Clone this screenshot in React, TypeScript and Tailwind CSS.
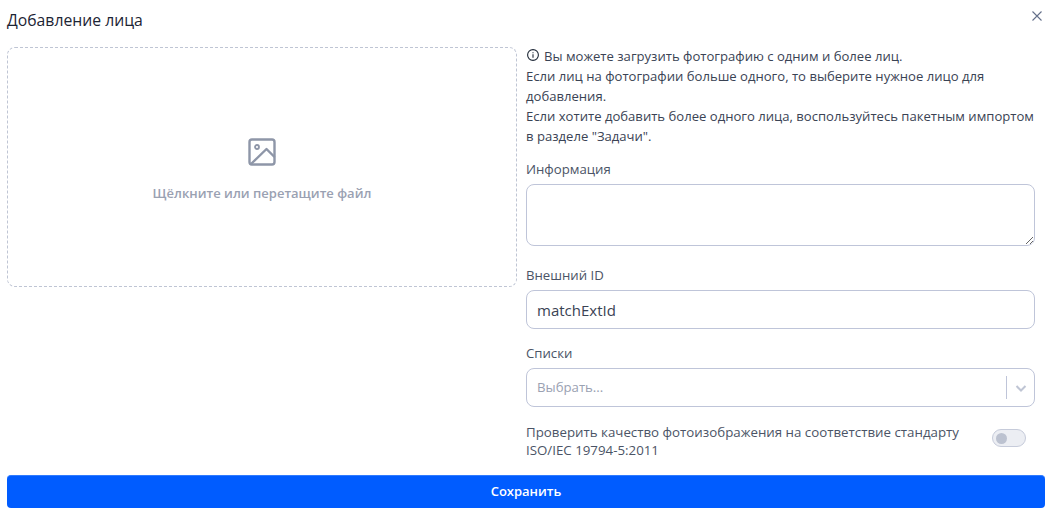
import React from "react";

export default function App() {
  return (
    <div className="w-[1050px] h-[518px] bg-white px-[7px] pt-[7px] font-['Open_Sans','Noto_Sans',sans-serif] text-[#1f2937] overflow-hidden flex flex-col">
      <div className="flex justify-between h-[40px] shrink-0">
        <div className="text-[15.75px] leading-[26px] text-[#1c2434]">Добавление лица</div>
        <button className="w-[14px] h-[14px] mt-[2px] mr-[-1px] text-[#64708a]">
          <svg viewBox="0 0 14 14" className="w-[14px] h-[14px]" fill="none" stroke="currentColor" strokeWidth="1.1"><path d="M2.5 2.5l9 9M11.5 2.5l-9 9" /></svg>
        </button>
      </div>
      <div className="flex gap-[9px] h-[428px] shrink-0">
        <div className="w-[510px] h-[240px] pt-[6px] rounded-[8px] border border-dashed border-[#bfc5d4] flex flex-col items-center justify-center">
          <svg viewBox="0 0 28 28" className="w-[28px] h-[28px]" fill="none" stroke="#8e96a8" strokeWidth="2.4" strokeLinejoin="round" strokeLinecap="round">
            <rect x="1.5" y="1.5" width="25" height="25" rx="2.5" />
            <circle cx="9" cy="9" r="2" strokeWidth="1.8" />
            <path d="M3 26L18.5 11L26 18.5" />
          </svg>
          <div className="mt-[18px] text-[13px] font-semibold leading-[18px] text-[#9aa1b2]">Щёлкните или перетащите файл</div>
        </div>
        <div className="w-[509px] flex flex-col">
          <div className="-mt-[1px] mr-[-4px] text-[13.1px] leading-[20px] text-[#3a4354]">
            <div className="flex items-center gap-[4px]">
              <svg viewBox="0 0 14 14" className="w-[14px] h-[14px] text-[#1f2937] mt-[-3px]" fill="none" stroke="currentColor" strokeWidth="1.1"><circle cx="7" cy="7" r="5.4" /><path d="M7 6.2v3.6M7 4.2v1" /></svg>
              <span>Вы можете загрузить фотографию с одним и более лиц.</span>
            </div>
            <div>Если лиц на фотографии больше одного, то выберите нужное лицо для добавления.</div>
            <div>Если хотите добавить более одного лица, воспользуйтесь пакетным импортом в разделе "Задачи".</div>
          </div>
          <label className="mt-[13px] h-[20px] text-[13.2px] leading-[20px] text-[#4b5466]">Информация</label>
          <textarea className="mt-[5px] w-full h-[62px] shrink-0 rounded-[8px] border border-[#bfc5d9] bg-white outline-none" />
          <label className="mt-[19px] h-[20px] text-[13.2px] leading-[20px] text-[#4b5466]">Внешний ID</label>
          <input readOnly value="matchExtId" className="mt-[5px] w-full h-[39px] shrink-0 rounded-[8px] border border-[#bfc5d9] bg-white px-[10px] text-[15px] text-[#3a4354] outline-none" />
          <label className="mt-[14px] h-[20px] text-[13.2px] leading-[20px] text-[#4b5466]">Списки</label>
          <div className="mt-[5px] w-full h-[39px] shrink-0 rounded-[8px] border border-[#bfc5d9] bg-white flex items-center pl-[10px]">
            <span className="flex-1 text-[13.2px] text-[#9aa1b2]">Выбрать...</span>
            <span className="w-px h-[23px] bg-[#bfc5d9]" />
            <span className="w-[27px] flex justify-center">
              <svg viewBox="0 0 14 14" className="w-[14px] h-[14px]" fill="none" stroke="#bfc5d4" strokeWidth="2"><path d="M2.5 5l4.5 4.5L11.5 5" /></svg>
            </span>
          </div>
          <div className="mt-[16px] flex items-start justify-between pr-[9px]">
            <div className="w-[450px] text-[13.3px] leading-[18px] text-[#4b5466]">Проверить качество фотоизображения на соответствие стандарту ISO/IEC 19794-5:2011</div>
            <div className="mt-[6px] w-[34px] h-[18px] rounded-full border border-[#c6cbda] bg-[#eceef3] flex items-center pl-[3px]">
              <span className="w-[11px] h-[11px] rounded-full bg-[#bcc2d0]" />
            </div>
          </div>
        </div>
      </div>
      <button className="w-[1038px] h-[33px] rounded-[4px] bg-[#005cff] border-t border-[#2f7bff] text-white text-[13px] font-semibold">Сохранить</button>
    </div>
  );
}
